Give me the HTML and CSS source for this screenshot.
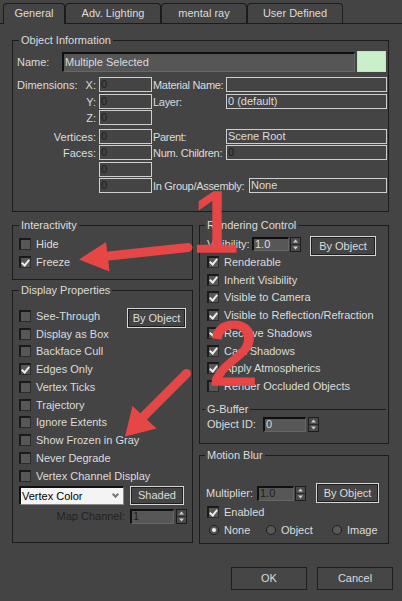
FILE: index.html
```html
<!DOCTYPE html>
<html>
<head>
<meta charset="utf-8">
<title>Object Properties</title>
<link rel="stylesheet" href="styles.css">
</head>
<body>
<div class="tabs">
  <div class="tab active t1">General</div>
  <div class="tab t2">Adv. Lighting</div>
  <div class="tab t3">mental ray</div>
  <div class="tab t4">User Defined</div>
</div>
<div class="page">
  <div class="group objinfo">
    <div class="legend">Object Information</div>
    <div class="name-row">
      <span class="name-lbl">Name:</span>
      <div class="name-field">Multiple Selected</div>
      <div class="swatch"></div>
    </div>
    <div class="irow m5">
      <span class="l1 split"><span>Dimensions:</span><span>X:</span></span>
      <div class="box dim">0</div>
      <span class="l2">Material Name:</span>
      <div class="box wide"></div>
    </div>
    <div class="irow m2">
      <span class="l1">Y:</span>
      <div class="box dim">0</div>
      <span class="l2">Layer:</span>
      <div class="box wide">0 (default)</div>
    </div>
    <div class="irow m1">
      <span class="l1">Z:</span>
      <div class="box dim">0</div>
    </div>
    <div class="irow m4">
      <span class="l1">Vertices:</span>
      <div class="box dim">0</div>
      <span class="l2">Parent:</span>
      <div class="box wide">Scene Root</div>
    </div>
    <div class="irow m1">
      <span class="l1">Faces:</span>
      <div class="box dim">0</div>
      <span class="l2">Num. Children:</span>
      <div class="box wide dim">0</div>
    </div>
    <div class="irow m2">
      <span class="l1"></span>
      <div class="box dim">0</div>
    </div>
    <div class="irow m1">
      <span class="l1"></span>
      <div class="box dim">0</div>
      <span class="l2 lg">In Group/Assembly:</span>
      <div class="box wider">None</div>
    </div>
  </div>

  <div class="cols">
    <div class="col left">
      <div class="group inter">
        <div class="legend">Interactivity</div>
        <div class="cb r18"><span class="ck"></span>Hide</div>
        <div class="cb r18"><span class="ck on"></span>Freeze</div>
      </div>
      <div class="group disp">
        <div class="legend">Display Properties</div>
        <div class="cb"><span class="ck"></span>See-Through<div class="btn byobj-l">By Object</div></div>
        <div class="cb"><span class="ck"></span>Display as Box</div>
        <div class="cb"><span class="ck"></span>Backface Cull</div>
        <div class="cb"><span class="ck on"></span>Edges Only</div>
        <div class="cb"><span class="ck"></span>Vertex Ticks</div>
        <div class="cb"><span class="ck"></span>Trajectory</div>
        <div class="cb"><span class="ck"></span>Ignore Extents</div>
        <div class="cb"><span class="ck"></span>Show Frozen in Gray</div>
        <div class="cb"><span class="ck"></span>Never Degrade</div>
        <div class="cb"><span class="ck"></span>Vertex Channel Display</div>
        <div class="dd-row">
          <div class="dropdown"><span>Vertex Color</span><span class="chev"></span></div>
          <div class="btn shaded">Shaded</div>
        </div>
        <div class="map-row">
          <span class="dimlbl">Map Channel:</span>
          <div class="spin map dim">1</div>
          <svg class="arr" width="11" height="15" viewBox="0 0 11 15"><rect x="0.5" y="0.5" width="10" height="14" fill="#4b4b4b" stroke="#1c1c1c"/><line x1="1" y1="7.5" x2="10" y2="7.5" stroke="#2a2a2a"/><path d="M3 5.5L5.5 2.5L8 5.5Z" fill="#cfcfcf"/><path d="M3 9.5L5.5 12.5L8 9.5Z" fill="#cfcfcf"/></svg>
        </div>
      </div>
    </div>

    <div class="col right">
      <div class="group rend">
        <div class="legend">Rendering Control</div>
        <div class="vis-row">
          <span class="vis-lbl">Visibility:</span>
          <div class="spin vis">1.0</div>
          <svg class="arr" width="11" height="15" viewBox="0 0 11 15"><rect x="0.5" y="0.5" width="10" height="14" fill="#4b4b4b" stroke="#1c1c1c"/><line x1="1" y1="7.5" x2="10" y2="7.5" stroke="#2a2a2a"/><path d="M3 5.5L5.5 2.5L8 5.5Z" fill="#cfcfcf"/><path d="M3 9.5L5.5 12.5L8 9.5Z" fill="#cfcfcf"/></svg>
          <div class="btn byobj-r">By Object</div>
        </div>
        <div class="cb"><span class="ck on"></span>Renderable</div>
        <div class="cb"><span class="ck on"></span>Inherit Visibility</div>
        <div class="cb"><span class="ck on"></span>Visible to Camera</div>
        <div class="cb"><span class="ck on"></span>Visible to Reflection/Refraction</div>
        <div class="cb"><span class="ck on"></span>Receive Shadows</div>
        <div class="cb"><span class="ck on"></span>Cast Shadows</div>
        <div class="cb"><span class="ck on"></span>Apply Atmospherics</div>
        <div class="cb"><span class="ck"></span>Render Occluded Objects</div>
        <div class="gbuf">
          <div class="legend">G-Buffer</div>
          <div class="oid-row">
            <span class="oid-lbl">Object ID:</span>
            <div class="spin oid">0</div>
            <svg class="arr a2" width="11" height="15" viewBox="0 0 11 15"><rect x="0.5" y="0.5" width="10" height="14" fill="#4b4b4b" stroke="#1c1c1c"/><line x1="1" y1="7.5" x2="10" y2="7.5" stroke="#2a2a2a"/><path d="M3 5.5L5.5 2.5L8 5.5Z" fill="#cfcfcf"/><path d="M3 9.5L5.5 12.5L8 9.5Z" fill="#cfcfcf"/></svg>
          </div>
        </div>
      </div>
      <div class="group blur">
        <div class="legend">Motion Blur</div>
        <div class="mul-row">
          <span class="mul-lbl">Multiplier:</span>
          <div class="spin mul dim">1.0</div>
          <svg class="arr" width="11" height="15" viewBox="0 0 11 15"><rect x="0.5" y="0.5" width="10" height="14" fill="#4b4b4b" stroke="#1c1c1c"/><line x1="1" y1="7.5" x2="10" y2="7.5" stroke="#2a2a2a"/><path d="M3 5.5L5.5 2.5L8 5.5Z" fill="#cfcfcf"/><path d="M3 9.5L5.5 12.5L8 9.5Z" fill="#cfcfcf"/></svg>
          <div class="btn byobj-m">By Object</div>
        </div>
        <div class="cb r18"><span class="ck on"></span>Enabled</div>
        <div class="radio-row">
          <span class="ri r-none"><span class="rd on"></span>None</span>
          <span class="ri r-obj"><span class="rd"></span>Object</span>
          <span class="ri"><span class="rd"></span>Image</span>
        </div>
      </div>
    </div>
  </div>

  <div class="actions">
    <div class="pbtn">OK</div>
    <div class="pbtn">Cancel</div>
  </div>
</div>

<svg class="overlay" width="402" height="601" viewBox="0 0 402 601">
  <g fill="#e64646">
    <line x1="188" y1="247.5" x2="104" y2="256.5" stroke="#e64646" stroke-width="9" stroke-linecap="round"/>
    <path d="M79 259.5L106 242L109.5 271.5Z"/>
    <line x1="186.5" y1="373.5" x2="142" y2="418" stroke="#e64646" stroke-width="9" stroke-linecap="round"/>
    <path d="M125 436.5L132.5 406L156.5 428.5Z"/>
    <text class="num" x="191" y="252" font-size="88" stroke="#e64646" stroke-width="1.6">1</text>
    <text class="num" x="208" y="385" font-size="91" stroke="#e64646" stroke-width="1.6">2</text>
  </g>
</svg>
</body>
</html>
```

FILE: styles.css
```css
* { box-sizing: border-box; }
html, body { margin: 0; padding: 0; }
body {
  width: 402px;
  height: 601px;
  overflow: hidden;
  position: relative;
  background: #444444;
  font-family: "Liberation Sans", Arial, sans-serif;
  font-size: 11px;
  color: #dcdcdc;
}

/* Tabs */
.tabs {
  display: flex;
  height: 24px;
  padding: 3px 0 0 3px;
  border-bottom: 1px solid #1c1c1c;
}
.tab {
  height: 20px;
  border: 1px solid #1c1c1c;
  border-bottom: none;
  border-radius: 4px 4px 0 0;
  text-align: center;
  line-height: 19px;
  background: #444444;
}
.tab.active { height: 21px; margin-bottom: -1px; }
.t1 { width: 62px; }
.t2 { width: 96px; }
.t3 { width: 86px; }
.t4 { width: 96px; }

.page { padding: 16px 0 0 12px; }

/* Group boxes: --pt = space from top border to first row,
   --pl = left inset, --lx = legend inset from the border */
.group {
  --pt: 9px;
  --pl: 6px;
  --lx: 6px;
  border: 1px solid #1c1c1c;
  padding-left: var(--pl);
}
.legend {
  width: max-content;
  height: 14px;
  line-height: 14px;
  margin: -8px 0 calc(var(--pt) - 6px) calc(var(--lx) - var(--pl));
  padding: 0 2px;
  background: #444444;
  white-space: nowrap;
}
.right .group { --lx: 5px; }

/* Object information */
.objinfo { --pt: 10px; --pl: 4px; width: 377px; padding-bottom: 18px; }
.name-row { display: flex; align-items: center; height: 21px; }
.name-lbl { width: 45px; }
.name-field {
  width: 293px;
  height: 20px;
  background: #565656;
  border-top: 2px solid #101010;
  border-left: 2px solid #101010;
  border-right: 1px solid #676767;
  border-bottom: 1px solid #676767;
  padding-left: 1px;
  line-height: 17px;
}
.swatch {
  width: 29px;
  height: 21px;
  margin-left: 2px;
  background: #c9f0c9;
  border: 1px solid #d6d6d6;
}
.irow { display: flex; align-items: center; height: 15px; white-space: nowrap; }
.m1 { margin-top: 1px; }
.m2 { margin-top: 2px; }
.m4 { margin-top: 4px; }
.m5 { margin-top: 5px; }
.l1 { width: 79px; margin-right: 3px; text-align: right; flex: none; }
.split { display: flex; justify-content: space-between; }
.l2 { width: 74px; padding-left: 1px; letter-spacing: -0.3px; flex: none; overflow: hidden; }
.l2.lg { width: 97px; }
.box {
  width: 53px;
  height: 15px;
  border: 1px solid #cfcfcf;
  padding-left: 1px;
  line-height: 13px;
  white-space: nowrap;
  flex: none;
}
.box.wide { width: 161px; }
.box.wider { width: 138px; }
.dim { color: #1e1e1e; }

/* Columns */
.cols { display: flex; gap: 6px; align-items: flex-start; margin-top: 13px; }
.col { display: flex; flex-direction: column; }
.col.left { width: 181px; }
.col.right { width: 190px; }

.inter { --pt: 9px; --pl: 6px; padding-bottom: 8px; }
.disp { --pt: 16px; --pl: 6px; margin-top: 10px; padding-bottom: 18.5px; }

.cb { display: flex; align-items: center; height: 17.75px; white-space: nowrap; }
.cb.r18 { height: 18px; }
.ck {
  width: 12px;
  height: 12px;
  flex: none;
  margin-right: 5px;
  background: #575757;
  border-top: 2px solid #1a1a1a;
  border-left: 2px solid #1a1a1a;
  border-right: 1px solid #2c2c2c;
  border-bottom: 1px solid #2c2c2c;
  display: flex;
  align-items: center;
  justify-content: center;
}
.ck.on::after {
  content: "";
  width: 3px;
  height: 6px;
  margin-top: -2px;
  border-right: 2px solid #ececec;
  border-bottom: 2px solid #ececec;
  transform: rotate(40deg);
}

.btn {
  height: 20px;
  border: 1px solid #d6d6d6;
  box-shadow: inset 0 0 0 1px #1e1e1e;
  background: #454545;
  text-align: center;
  line-height: 18px;
  flex: none;
}
.byobj-l { width: 59px; margin: 4px 6px 0 auto; }
.shaded { width: 54px; height: 19px; line-height: 17px; margin-left: 6px; }

.dd-row { display: flex; margin-top: 1px; height: 19px; }
.dropdown {
  width: 105px;
  height: 19px;
  background: #f4f4f4;
  color: #000;
  border-top: 2px solid #111;
  border-left: 2px solid #111;
  border-right: 1px solid #888;
  border-bottom: 1px solid #888;
  display: flex;
  align-items: center;
  justify-content: space-between;
  padding: 0 5px 0 1px;
}
.chev {
  width: 5px;
  height: 5px;
  margin-top: -3px;
  border-right: 2px solid #777;
  border-bottom: 2px solid #777;
  transform: rotate(45deg);
}

.map-row {
  display: flex;
  align-items: center;
  justify-content: flex-end;
  margin-top: 4px;
  height: 15px;
  padding-right: 5px;
}
.dimlbl { color: #222; margin-right: 5px; }
.spin {
  height: 14px;
  background: #575757;
  border-top: 2px solid #101010;
  border-left: 2px solid #101010;
  border-right: 1px solid #666;
  border-bottom: 1px solid #666;
  padding-left: 1px;
  line-height: 11px;
  flex: none;
}
.spin.map { width: 44px; height: 15px; }
.arr { flex: none; margin-left: 2px; display: block; }

/* Rendering control */
.rend { --pt: 9px; --pl: 7px; padding-bottom: 10px; }
.vis-row { display: flex; align-items: center; height: 18px; }
.vis-lbl { width: 45px; }
.spin.vis { width: 37px; }
.vis-row .arr { margin-left: 1px; }
.byobj-r { width: 66px; margin: 4px 0 0 9px; }

.gbuf {
  --pt: 5px;
  --pl: 5px;
  --lx: 3px;
  margin: 14px 2px 0 -5px;
  border-top: 1px solid #1c1c1c;
  padding-left: var(--pl);
}
.oid-row { display: flex; align-items: center; height: 18px; }
.oid-lbl { width: 56px; }
.spin.oid { width: 43px; height: 15px; }

/* Motion blur */
.blur { --pt: 27px; --pl: 7px; margin-top: 11px; padding-bottom: 4px; }
.mul-row { display: flex; align-items: center; height: 20px; }
.mul-lbl { width: 51px; margin-left: -1px; }
.spin.mul { width: 37px; height: 15px; }
.mul-row .arr { margin-left: 1px; }
.byobj-m { width: 63px; margin-left: 10px; }

.radio-row { display: flex; align-items: center; height: 18px; padding-left: 2px; }
.ri { display: flex; align-items: center; }
.r-none { width: 57px; }
.r-obj { width: 66px; }
.rd {
  width: 10px;
  height: 10px;
  border-radius: 50%;
  background: #585858;
  border: 1px solid #1e1e1e;
  margin-right: 5px;
  display: flex;
  align-items: center;
  justify-content: center;
}
.rd.on::after {
  content: "";
  width: 4px;
  height: 4px;
  border-radius: 50%;
  background: #f0f0f0;
}

/* Buttons */
.actions {
  display: flex;
  justify-content: flex-end;
  gap: 10px;
  margin-top: 23px;
  padding-right: 9px;
}
.pbtn {
  width: 76px;
  height: 23px;
  background: #464646;
  border: 1px solid #1e1e1e;
  text-align: center;
  line-height: 21px;
}

/* Annotation overlay */
.overlay {
  position: absolute;
  left: 0;
  top: 0;
  pointer-events: none;
}
.num { font-family: "Liberation Sans", Arial, sans-serif; }
```
